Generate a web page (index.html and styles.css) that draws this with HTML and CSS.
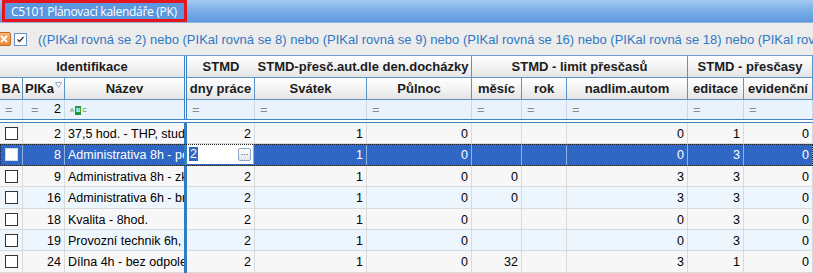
FILE: index.html
```html
<!DOCTYPE html>
<html lang="cs">
<head>
    <meta charset="UTF-8">
    <title>C5101 Plánovací kalendáře (PK)</title>
    <link rel="stylesheet" href="styles.css">
</head>
<body>
    <div class="titlebar">
        <div class="title-tab">C5101 Plánovací kalendáře (PK)</div>
    </div>

    <div class="filterbar">
        <span class="btn-clear">
            <svg width="12" height="12" viewBox="0 0 12 12"><path d="M3 3 L9 9 M9 3 L3 9" stroke="#fff" stroke-width="1.8"/></svg>
        </span>
        <span class="btn-check">
            <svg width="11" height="11" viewBox="0 0 11 11"><path d="M2.5 5.5 L4.5 7.5 L8.5 3" fill="none" stroke="#333" stroke-width="1.3"/></svg>
        </span>
        <span class="filter-text">((PIKal rovná se 2) nebo (PIKal rovná se 8) nebo (PIKal rovná se 9) nebo (PIKal rovná se 16) nebo (PIKal rovná se 18) nebo (PIKal rovná se 19) nebo (PIKal rovná se 24))</span>
    </div>

    <div class="grid">
        <div class="row head">
            <div class="hcell span3">Identifikace</div>
            <div class="sep sep-double"></div>
            <div class="hcell">STMD</div>
            <div class="hcell span2">STMD-přesč.aut.dle den.docházky</div>
            <div class="hcell span3">STMD - limit přesčasů</div>
            <div class="hcell span2">STMD - přesčasy</div>
        </div>
        <div class="row head">
            <div class="hcell">BA</div>
            <div class="hcell hcell-sort"><span class="clip">PIKal</span><svg width="7" height="6" viewBox="0 0 7 6"><path d="M0.5 0.5 H6.5 L3.5 5.5 Z" fill="#fff" stroke="#9aa8b8"/></svg></div>
            <div class="hcell">Název</div>
            <div class="sep sep-double"></div>
            <div class="hcell">dny práce</div>
            <div class="hcell">Svátek</div>
            <div class="hcell">Půlnoc</div>
            <div class="hcell">měsíc</div>
            <div class="hcell">rok</div>
            <div class="hcell">nadlim.autom</div>
            <div class="hcell">editace</div>
            <div class="hcell">evidenční</div>
        </div>
        <div class="row filter">
            <div class="fcell">=</div>
            <div class="fcell fcell-num"><span>=</span><span>2</span></div>
            <div class="fcell"><span class="abc"><i>A</i><b>B</b><i>C</i></span></div>
            <div class="sep sep-double"></div>
            <div class="fcell">=</div>
            <div class="fcell">=</div>
            <div class="fcell">=</div>
            <div class="fcell">=</div>
            <div class="fcell">=</div>
            <div class="fcell">=</div>
            <div class="fcell">=</div>
            <div class="fcell">=</div>
        </div>

        <div class="body" id="body"></div>
    </div>

    <script>
        const rows = [
            { id: 2, name: '37,5 hod. - THP, studenti', dny: 2, svatek: 1, pulnoc: 0, mesic: '', rok: '', nadlim: 0, editace: 1, evid: 0 },
            { id: 8, name: 'Administrativa 8h - pevná', dny: 2, svatek: 1, pulnoc: 0, mesic: '', rok: '', nadlim: 0, editace: 3, evid: 0, selected: true },
            { id: 9, name: 'Administrativa 8h - zkrácená', dny: 2, svatek: 1, pulnoc: 0, mesic: 0, rok: '', nadlim: 3, editace: 3, evid: 0 },
            { id: 16, name: 'Administrativa 6h - brigáda', dny: 2, svatek: 1, pulnoc: 0, mesic: 0, rok: '', nadlim: 3, editace: 3, evid: 0 },
            { id: 18, name: 'Kvalita - 8hod.', dny: 2, svatek: 1, pulnoc: 0, mesic: '', rok: '', nadlim: 0, editace: 3, evid: 0 },
            { id: 19, name: 'Provozní technik 6h, směny', dny: 2, svatek: 1, pulnoc: 0, mesic: '', rok: '', nadlim: 0, editace: 3, evid: 0 },
            { id: 24, name: 'Dílna 4h - bez odpoledne', dny: 2, svatek: 1, pulnoc: 0, mesic: 32, rok: '', nadlim: 3, editace: 1, evid: 0 }
        ];

        const body = document.getElementById('body');
        rows.forEach((r, i) => {
            const row = document.createElement('div');
            row.className = 'row data ' + (r.selected ? 'selected' : (i % 2 ? 'even' : 'odd'));
            const dny = r.selected
                ? `<div class="cell editor"><span class="edit-sel">2</span><span class="edit-btn">...</span></div>`
                : `<div class="cell num">${r.dny}</div>`;
            row.innerHTML = `
                <div class="cell"><span class="chk"></span></div>
                <div class="cell num">${r.id}</div>
                <div class="cell">${r.name}</div>
                <div class="sep"></div>
                ${dny}
                <div class="cell num">${r.svatek}</div>
                <div class="cell num">${r.pulnoc}</div>
                <div class="cell num">${r.mesic}</div>
                <div class="cell num">${r.rok}</div>
                <div class="cell num">${r.nadlim}</div>
                <div class="cell num">${r.editace}</div>
                <div class="cell num">${r.evid}</div>`;
            body.appendChild(row);
        });
    </script>
</body>
</html>
```

FILE: styles.css
```css
body {
    margin: 0;
    width: 813px;
    height: 273px;
    overflow: hidden;
    background: #ececec;
    font-family: "Liberation Sans", Arial, sans-serif;
    font-size: 12px;
    color: #000;
}

/* title bar */
.titlebar {
    height: 23px;
    background: linear-gradient(#a3c9f1, #76abe6 55%, #5e99df);
    border-bottom: 1px solid #8fb5de;
    box-sizing: border-box;
}

.title-tab {
    display: inline-block;
    margin-left: 2px;
    height: 22px;
    width: 185px;
    box-sizing: border-box;
    padding: 0 0 0 6px;
    border: 3px solid #e4151f;
    background: #5b97de;
    color: #fff;
    font-family: "Open Sans", sans-serif;
    font-size: 12px;
    letter-spacing: -0.3px;
    line-height: 17px;
    white-space: nowrap;
}

/* filter bar */
.filterbar {
    height: 32px;
    display: flex;
    align-items: center;
    white-space: nowrap;
    overflow: hidden;
}

.btn-clear {
    flex: none;
    width: 12px;
    height: 12px;
    margin-left: -3px;
    border: 1px solid #c96b22;
    border-radius: 2px;
    background: linear-gradient(#f8b57a, #ea8638);
    display: flex;
}

.btn-check {
    flex: none;
    width: 11px;
    height: 11px;
    margin-left: 3px;
    border: 1px solid #6d93c4;
    background: #fff;
    display: flex;
}

.filter-text {
    margin-left: 11px;
    color: #2f78c4;
    font-size: 13px;
}

/* grid */
.grid {
    background: #fff;
    border-top: 1px solid #6f9ccb;
}

.row {
    display: grid;
    grid-template-columns: 23px 42px 119px 3px 68px 112px 105px 50px 45px 121px 56px 69px;
}

.span2 { grid-column: span 2; }
.span3 { grid-column: span 3; }

.sep {
    background: #2f7dc2;
}

.sep-double {
    background: linear-gradient(to right, #3d83c4 1px, #f4f8fc 1px 2px, #3d83c4 2px);
}

.hcell {
    height: 22px;
    box-sizing: border-box;
    border-right: 1px solid #5d94c8;
    border-bottom: 1px solid #5d94c8;
    background: linear-gradient(#ffffff, #f3f3f3 50%, #e4e4e4);
    font-weight: bold;
    font-size: 13px;
    line-height: 21px;
    text-align: center;
    color: #1b1b1b;
    white-space: nowrap;
    overflow: hidden;
}

.hcell.span3:first-child,
.row.head .hcell:nth-child(3) {
    border-right: none;
}

.hcell-sort {
    display: flex;
    align-items: flex-start;
    padding-left: 2px;
}

.hcell-sort .clip {
    width: 29px;
    overflow: hidden;
    text-align: left;
}

.hcell-sort svg {
    margin-top: 4px;
    margin-left: 1px;
}

.row.filter {
    background: #eaf3fc;
    border-bottom: 1px solid #3d83c4;
    margin-bottom: 2px;
}

.fcell {
    height: 19px;
    box-sizing: border-box;
    border-right: 1px solid #c8d9ea;
    padding-left: 5px;
    color: #8a8a8a;
    line-height: 19px;
    font-size: 13px;
    overflow: hidden;
}

.row.filter .fcell:nth-child(3) {
    border-right: none;
}

.fcell-num {
    display: flex;
    justify-content: space-between;
    padding: 0 3px 0 8px;
}

.fcell-num span:last-child {
    color: #000;
    font-size: 12.5px;
}

.abc {
    display: inline-flex;
    align-items: center;
    gap: 1px;
    font-size: 6px;
    line-height: 7px;
    vertical-align: 2px;
}

.abc i {
    font-style: normal;
    color: #2b8a2b;
}

.abc b {
    background: #1f9a32;
    color: #fff;
    padding: 1px 1px;
}

.body {
    border-top: 1px solid #3d83c4;
}

.row.data {
    height: 21.4px;
    font-size: 12.5px;
}

.row.odd { background: #f7f7f7; }
.row.even { background: #edf5fd; }

.row.selected {
    background: #3167c4;
    color: #fff;
    outline: 1px dotted #222;
    outline-offset: -1px;
    position: relative;
}

.cell {
    box-sizing: border-box;
    border-right: 1px solid #dadada;
    border-bottom: 1px solid #dadada;
    padding: 1px 3px 0;
    line-height: 20px;
    white-space: nowrap;
    overflow: hidden;
}

.row.data .cell:nth-child(3) {
    border-right: none;
}

.row.selected .cell {
    border-right-color: #8fb0e2;
    border-bottom-color: #3167c4;
}

.num {
    text-align: right;
}

.chk {
    display: inline-block;
    width: 11px;
    height: 11px;
    margin: 3px 0 0 2px;
    border: 1px solid #333;
    background: #fff;
    vertical-align: top;
}

.row.selected .chk {
    border-color: #cfd9ea;
    background: #fff;
}

.editor {
    background: #fff;
    color: #000;
    display: flex;
    align-items: center;
    justify-content: space-between;
    padding: 0 2px 0 2px;
    margin: 0 1px 1px 0;
}

.edit-sel {
    background: #3167c4;
    color: #fff;
    line-height: 14px;
    padding: 0 1px;
}

.edit-btn {
    width: 13px;
    height: 13px;
    box-sizing: border-box;
    border: 1px solid #8ea6c6;
    border-radius: 2px;
    background: linear-gradient(#fdfdfd, #dfe6ef);
    color: #345;
    font-size: 9px;
    line-height: 6px;
    text-align: center;
}
```
